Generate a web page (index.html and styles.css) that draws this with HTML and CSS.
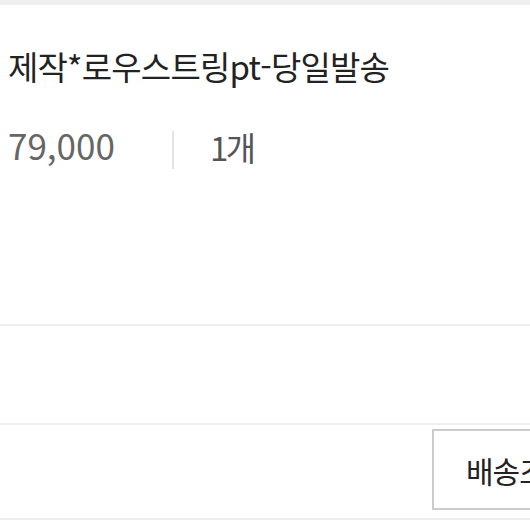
FILE: index.html
```html
<!DOCTYPE html>
<html lang="ko">
<head>
  <meta charset="UTF-8" />
  <title>주문 상품</title>
  <link rel="stylesheet" href="styles.css">
</head>
<body>
  <div class="topbar"></div>

  <div class="item">
    <h1 class="item-name">제작*로우스트링pt-당일발송</h1>
    <div class="item-meta">
      <span class="price">79,000</span>
      <span class="divider"></span>
      <span class="qty">1개</span>
    </div>
  </div>

  <div class="spacer"></div>

  <div class="actions">
    <button class="btn">배송조회</button>
  </div>
</body>
</html>
```

FILE: styles.css
```css
body {
  margin: 0;
  background: #fff;
  font-family: "Noto Sans CJK KR", "Noto Sans", sans-serif;
  color: #222;
  overflow: hidden;
}

.topbar {
  height: 5px;
  background: #efefef;
}

.item {
  height: 320px;
  padding: 0 0 0 8px;
  border-bottom: 2px solid #eeeeee;
  box-sizing: border-box;
  margin-top: 1px;
}

.item-name {
  margin: 0;
  padding-top: 32px;
  font-size: 33px;
  font-weight: 400;
  letter-spacing: -0.8px;
  line-height: 56px;
}

.item-meta {
  display: flex;
  align-items: flex-start;
  margin-top: 31px;
  font-size: 35px;
  line-height: 40px;
  color: #666;
}

.divider {
  width: 2px;
  height: 38px;
  margin: 6px 36px 0 57px;
  background: #e4e4e4;
}

.qty {
  padding-top: 2px;
  font-size: 33px;
  color: #555;
  letter-spacing: -2.5px;
}

.spacer {
  height: 97px;
  border-bottom: 2px solid #eeeeee;
}

.actions {
  display: flex;
  justify-content: flex-end;
  padding: 4px 0 8px;
  border-bottom: 2px solid #eeeeee;
}

.btn {
  width: 110px;
  height: 81px;
  margin-right: -12px;
  padding: 0 0 0 32px;
  text-align: left;
  white-space: nowrap;
  overflow: hidden;
  background: #fff;
  border: 2px solid #cccccc;
  font-family: inherit;
  font-size: 30px;
  color: #222;
  letter-spacing: -1px;
}
```
